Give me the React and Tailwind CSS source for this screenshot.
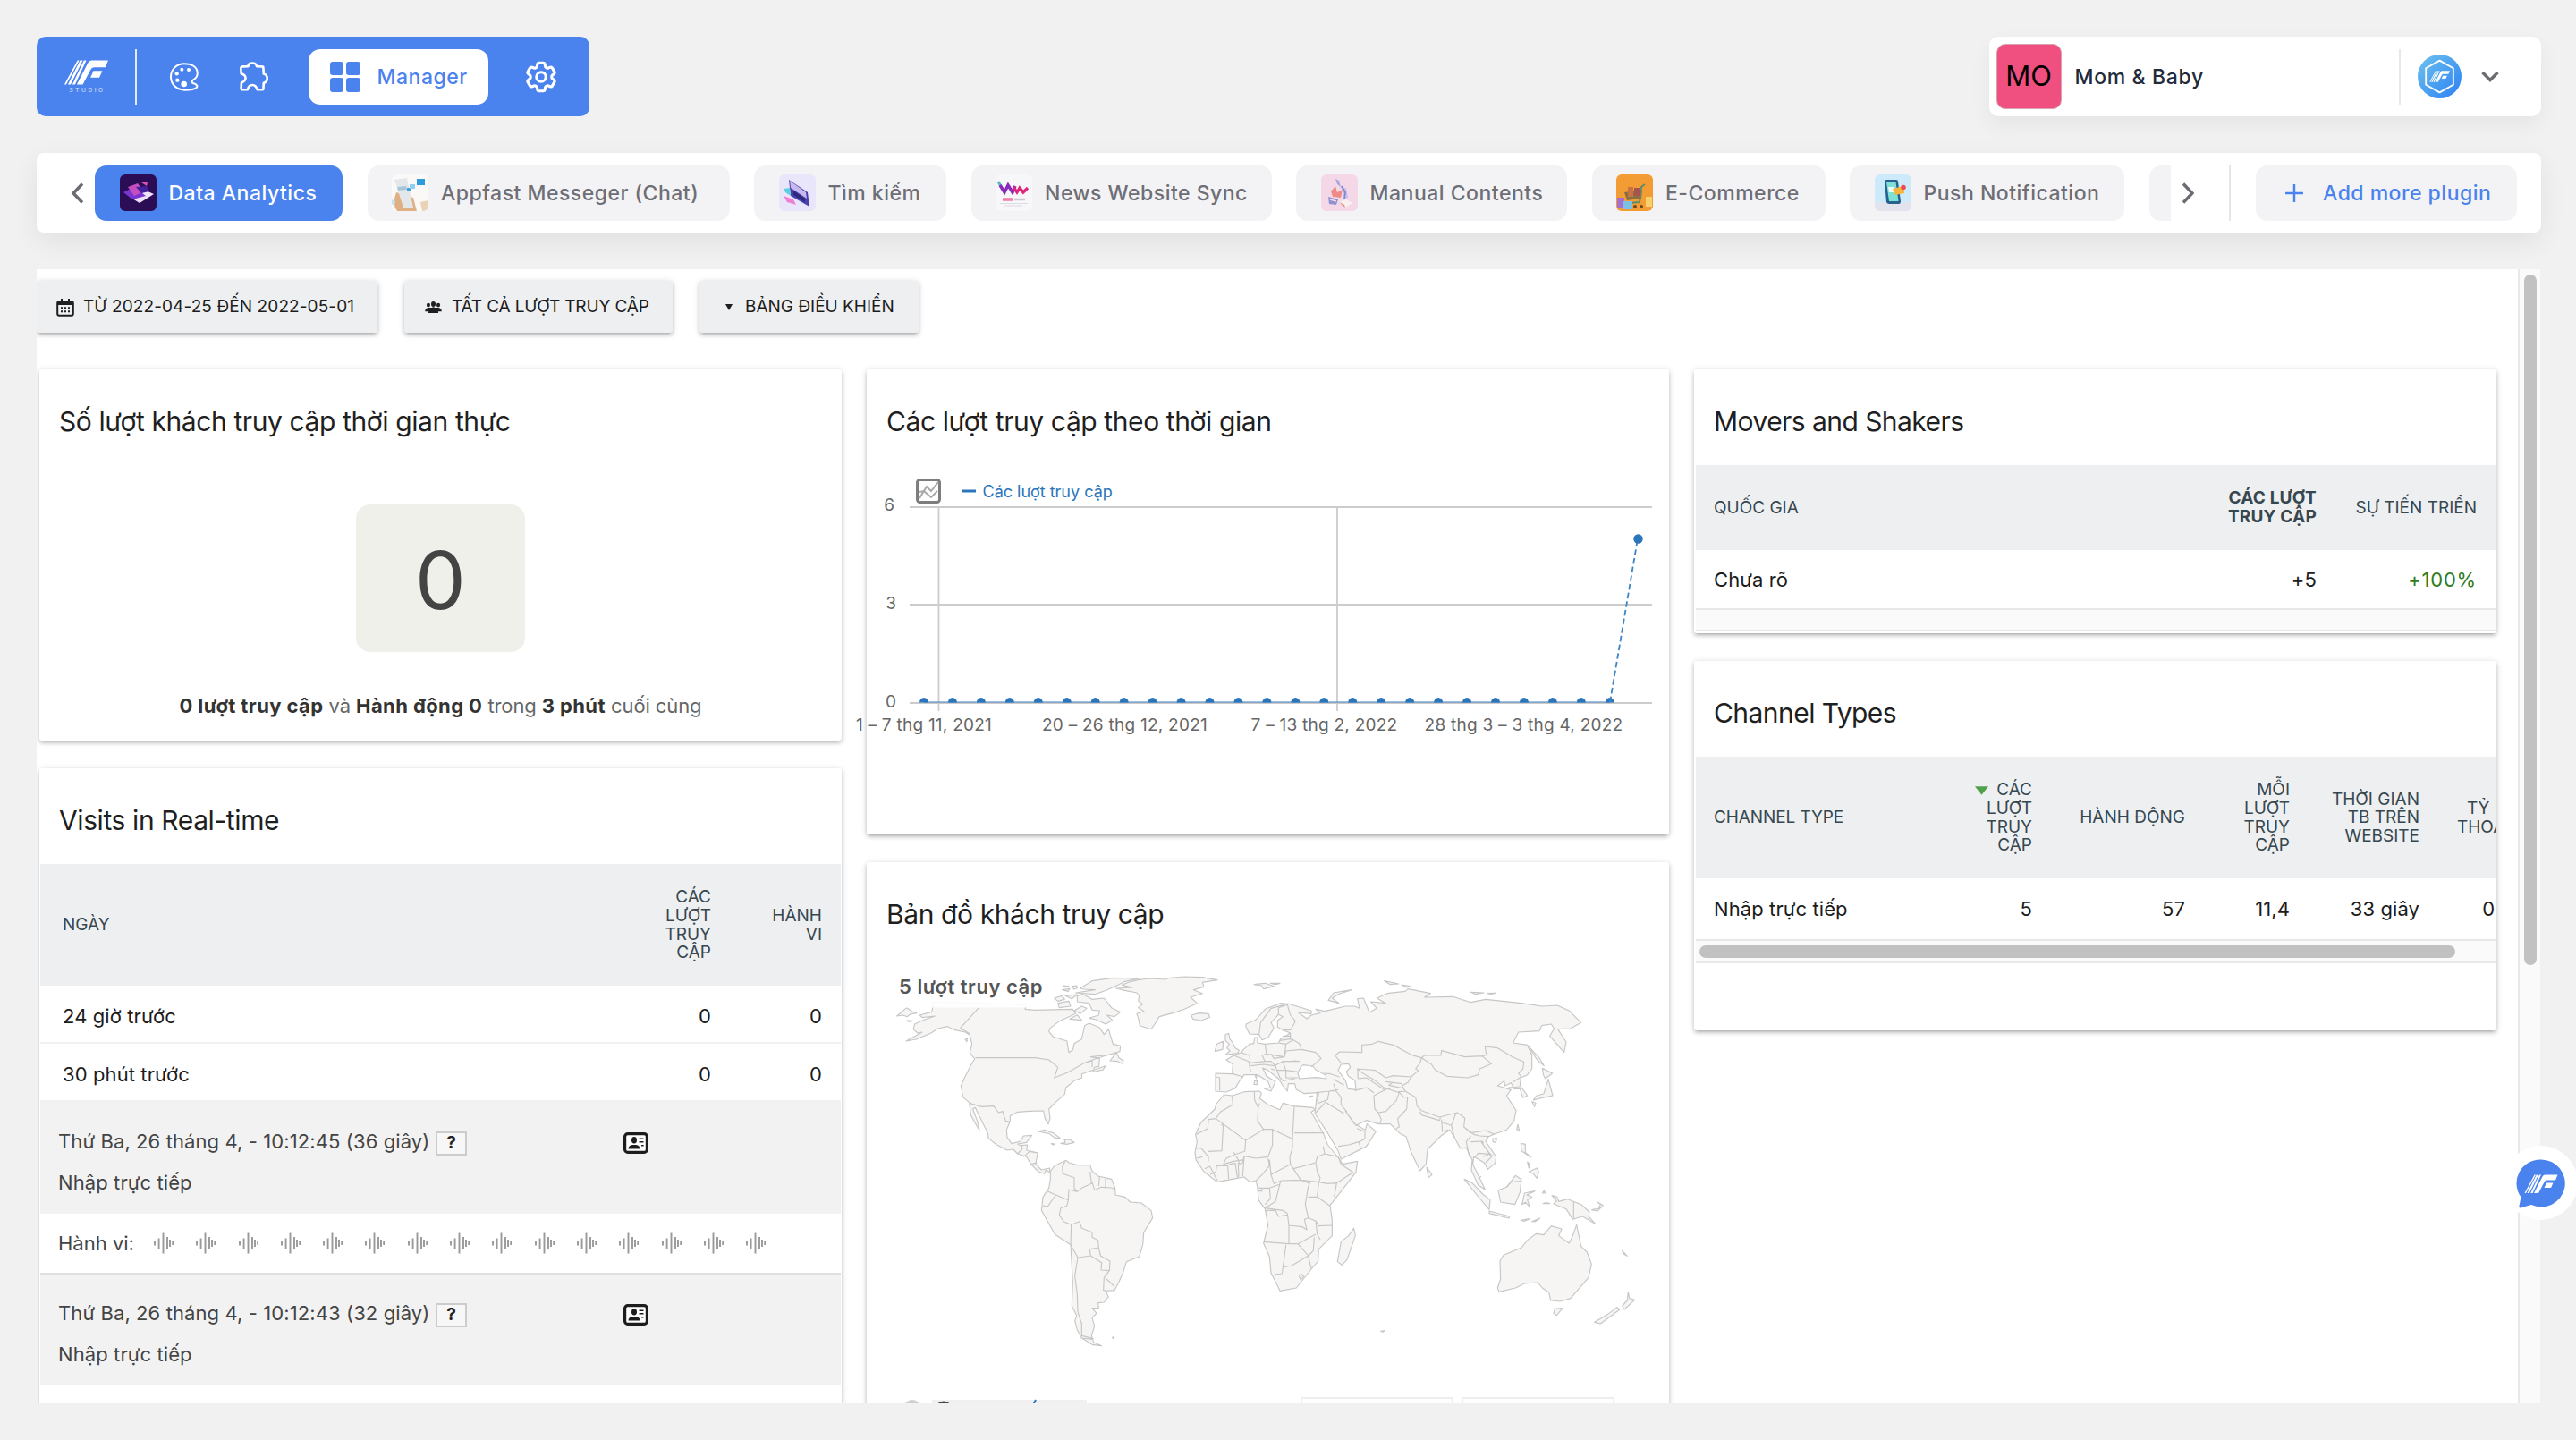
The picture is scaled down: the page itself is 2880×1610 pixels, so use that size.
import React from "react";
import { HiOutlineCog6Tooth } from "react-icons/hi2";

/* ---------- brand marks and icons ---------- */

function BrandGlyph() {
  return (
    <g>
      <path d="M0 82 L6 82 L50 0 L44 0Z M12 82 L21 82 L62 0 L53 0Z M27 82 L36 82 L74 0 L66 0Z" />
      <path d="M42 82 L62 82 L88 33 Q92 24 100 24 L138 24 L148 0 L92 0 Q84 0 80 8Z" />
      <path d="M98 36 L128 36 L118 58 L88 58Z" />
    </g>
  );
}

function StudioLogo() {
  return (
    <div className="flex h-[38px] w-[52px] flex-col items-center">
      <svg viewBox="0 0 148 82" className="h-[28px] w-[49px] fill-white">
        <BrandGlyph />
      </svg>
      <span className="mt-[3px] pl-[3px] text-[6.5px] leading-[7px] tracking-[2.6px] text-white/80">STUDIO</span>
    </div>
  );
}

function PaletteIcon() {
  return (
    <svg viewBox="450 88 96 96" className="h-[32px] w-[32px]">
      <path
        d="M498 92 C471 92 453 112 453 136 C453 162 474 180 500 180 C516 180 531 178 540 171 C544 165 537 160 529 158 C521 155 523 147 532 143 C541 137 543 128 542 119 C539 100 519 92 498 92Z"
        fill="none"
        stroke="white"
        strokeWidth="6"
      />
      <g fill="white">
        <circle cx="490" cy="111" r="6" />
        <circle cx="513" cy="112" r="6" />
        <circle cx="473" cy="125" r="6.5" />
        <circle cx="475" cy="147" r="6.5" />
        <circle cx="497" cy="160" r="10" />
      </g>
    </svg>
  );
}

function PuzzleIcon() {
  return (
    <svg viewBox="684 86 98 100" className="h-[33px] w-[32px]">
      <path
        d="M693 102 L713 101 Q713 90 727 90 Q741 90 742 101 L761 102 Q765 102 765 107 L766 127 Q778 130 778 142 Q778 155 766 158 L765 177 Q765 181 760 181 L744 181 Q740 165 727 165 Q715 165 711 181 L694 181 Q689 181 689 177 L690 157 Q704 152 704 141 Q704 131 689 126 L688 107 Q689 102 693 102Z"
        fill="none"
        stroke="white"
        strokeWidth="8"
        strokeLinejoin="round"
      />
    </svg>
  );
}

function GridIcon() {
  return (
    <div className="grid h-[34px] w-[34px] grid-cols-2 gap-[3px]">
      <i className="rounded-[3px] bg-[#4a82ee]" />
      <i className="rounded-[3px] bg-[#4a82ee]" />
      <i className="rounded-[3px] bg-[#4a82ee]" />
      <i className="rounded-[3px] bg-[#4a82ee]" />
    </div>
  );
}

function Chevron({ d, box, className }) {
  return (
    <svg viewBox={box} className={className} fill="none" stroke="#6b6b72" strokeWidth="3.4">
      <path d={d} />
    </svg>
  );
}

function AccountLogo() {
  return (
    <svg viewBox="0 0 48 48" className="h-[49px] w-[49px]">
      <defs>
        <linearGradient id="acc" x1="0" y1="0" x2="1" y2="1">
          <stop offset="0" stopColor="#6fc3ee" />
          <stop offset="1" stopColor="#2a80f3" />
        </linearGradient>
      </defs>
      <circle cx="24" cy="24" r="24" fill="url(#acc)" />
      <path d="M24 6.5 L39 15 V33 L24 41.5 L9 33 V15Z" fill="none" stroke="white" strokeWidth="1.8" strokeLinejoin="round" />
      <g transform="translate(13 17.8) scale(0.15)" fill="white">
        <BrandGlyph />
      </g>
    </svg>
  );
}

function CalendarIcon() {
  return (
    <svg viewBox="0 0 20 20" className="h-[20px] w-[20px]">
      <path d="M5 0h2v3H5zM13 0h2v3h-2z" fill="#1f1f1f" />
      <rect x="1.2" y="3" width="17.6" height="15.8" rx="2" fill="none" stroke="#1f1f1f" strokeWidth="2" />
      <rect x="1" y="2.5" width="18" height="4.5" fill="#1f1f1f" />
      <path d="M5 9.2h2v2H5zM9 9.2h2v2H9zM13 9.2h2v2h-2zM5 13.2h2v2H5zM9 13.2h2v2H9zM13 13.2h2v2h-2z" fill="#1f1f1f" />
    </svg>
  );
}

function UsersIcon() {
  return (
    <svg viewBox="0 0 20 14" className="h-[13px] w-[19px]" fill="#1f1f1f">
      <ellipse cx="4" cy="4.4" rx="2.2" ry="2.6" />
      <ellipse cx="16" cy="4.4" rx="2.2" ry="2.6" />
      <ellipse cx="10" cy="3.2" rx="2.7" ry="3.2" />
      <path d="M0 12 Q0 8 4 7.5 Q7 8 10 7 Q13 8 16 7.5 Q20 8 20 12Z" />
      <path d="M4 14 Q4 8 10 7 Q16 8 16 14Z" />
    </svg>
  );
}

function ProfileCardIcon() {
  return (
    <svg viewBox="0 0 28 24" className="h-[24px] w-[28px]">
      <rect x="1.6" y="1.6" width="24.8" height="20.8" rx="3.2" fill="white" stroke="#1d1d1d" strokeWidth="3.2" />
      <ellipse cx="12" cy="8.7" rx="3" ry="3.8" fill="#1d1d1d" />
      <path d="M5.5 18.5 Q5.5 14.5 10 14 L14 14 Q18.5 14.5 18.5 18.5Z" fill="#1d1d1d" />
      <path d="M17.5 6.5h5v1.6h-5zM17.5 10h5v1.6h-5zM20 14h2.6v1.6H20z" fill="#1d1d1d" />
    </svg>
  );
}

function ActionIcon() {
  return (
    <svg viewBox="0 0 22 24" className="h-[24px] w-[22px]" stroke="#999999" strokeWidth="1.9">
      <path d="M1 9.5V14.5M5.6 6.5V18M10.5 0.5V23.5M15 5V18.5M18 8V16M21.2 10V14" />
    </svg>
  );
}

/* ---------- plugin thumbnails ---------- */

function Thumb({ children }) {
  return (
    <svg viewBox="0 0 41 41" className="h-[41px] w-[41px] shrink-0 rounded-[6px]">
      {children}
    </svg>
  );
}

const thumbs = {
  analytics: (
    <Thumb>
      <rect width="41" height="41" fill="#2a0d55" />
      <path d="M14 27 L29 18 L38 22 L22 32Z" fill="#efe3fb" />
      <path d="M4 20 L16 14 L29 24 L14 28Z" fill="#7a35d0" />
      <path d="M9 14 L20 10 L27 19 L16 24Z" fill="#c44ec0" />
      <path d="M18 14 L30 13 L33 19 L24 21Z" fill="#44209c" />
      <path d="M24 9 L31 9 L30 13Z" fill="#d94fb4" />
    </Thumb>
  ),
  chat: (
    <Thumb>
      <rect width="41" height="41" fill="#faf9f8" />
      <path d="M5 20 Q0 34 6 41 H28 L24 26Z" fill="#dfb083" />
      <path d="M3 6 L17 4 L24 37 L13 37Z" fill="#e3e7ea" />
      <path d="M6 14 L16 13 L17 17 L7 18Z" fill="#a8c6da" />
      <rect x="28" y="5" width="9" height="7" fill="#2f9bdc" />
      <rect x="17" y="15" width="4" height="4" fill="#3aa4de" />
      <path d="M20 11h6v5h-6z" fill="#8ed0f0" />
      <path d="M32 31 L41 29 V41 H34Z" fill="#ead3b5" />
      <path d="M0 28 L4 30 L3 35 L0 33Z" fill="#bfe3f0" />
    </Thumb>
  ),
  search: (
    <Thumb>
      <rect width="41" height="41" fill="#e9e6fb" />
      <path d="M11 6 L32 20 L34 36 L13 24Z" fill="#4b3fae" />
      <path d="M12 7 L30 20 L31 27 L13 15Z" fill="#c9b8ee" />
      <path d="M5 16 L12 15 L13 24 L7 20Z" fill="#5fd0df" />
      <path d="M5 24 L16 28 L19 34 L9 31Z" fill="#ee7fd2" />
      <path d="M16 18 L29 27 L29 31 L16 23Z" fill="#2d2b79" />
    </Thumb>
  ),
  news: (
    <Thumb>
      <rect width="41" height="41" fill="#f7f7fa" />
      <path d="M3 8 L8 17" stroke="#55b9bd" strokeWidth="3" fill="none" />
      <path d="M5 12 L10 20 L14 12 L19 20 L22 13" stroke="#8a2bbd" strokeWidth="3.4" fill="none" />
      <path d="M20 14 L24 20 L27 15 L31 20 L36 15" stroke="#e0247a" strokeWidth="3.2" fill="none" />
      <path d="M8 28h12" stroke="#f27aa5" strokeWidth="3.4" />
      <path d="M21 28h12" stroke="#c9c9cf" strokeWidth="2.6" />
      <path d="M5 32.5h31M10 35h20" stroke="#dcdce0" strokeWidth="1.2" />
    </Thumb>
  ),
  manual: (
    <Thumb>
      <rect width="41" height="41" fill="#f4d8e8" />
      <path d="M16 5 L20 7 L22 14 L18 11Z" fill="#a9a6dd" />
      <path d="M20 12 L28 16 L30 26 L25 28 L24 18Z" fill="#c3bcec" />
      <path d="M11 19 L16 13 L18 20 L24 17 L22 26 L13 25Z" fill="#ef8b86" />
      <path d="M23 13 L27 20 L26 28" stroke="#7f88d2" strokeWidth="1.6" fill="none" />
      <path d="M8 25 L19 28 L17 34 L9 33Z" fill="#8f93cf" />
      <path d="M10 28 L17 30" stroke="#f4d8e8" strokeWidth="1.4" />
      <path d="M20 31 L28 28 L35 32 L27 37Z" fill="#f9f1ee" />
      <path d="M20 31 L27 37 L26 34Z" fill="#e07c74" />
    </Thumb>
  ),
  shop: (
    <Thumb>
      <rect width="41" height="41" fill="#f39c33" />
      <path d="M9 20 L29 17 L28 27 L12 29Z" fill="#8a7040" />
      <rect x="13" y="14" width="6" height="11" fill="#c97244" />
      <rect x="20" y="15" width="6" height="9" fill="#a8544c" />
      <path d="M32 11 L28 14 L26 31 L13 32" stroke="#5f8c68" strokeWidth="2" fill="none" />
      <rect x="1" y="26" width="8" height="12" fill="#a36fd0" />
      <rect x="8" y="30" width="10" height="9" fill="#7cc1e4" />
      <rect x="33" y="25" width="7" height="11" fill="#f7cf6b" />
      <circle cx="21" cy="36" r="2" fill="#6b4a2a" />
      <circle cx="28" cy="36" r="2" fill="#6b4a2a" />
    </Thumb>
  ),
  push: (
    <Thumb>
      <rect width="41" height="41" fill="#cdeafb" />
      <rect y="31" width="41" height="10" fill="#e3e3ee" />
      <path d="M11 8 Q11 6 13 6 L24 6 Q26 6 26 8 L29 30 Q29 33 27 33 L16 33 Q14 33 13 31Z" fill="#27618f" />
      <path d="M13 8.5 L23.5 8.5 L26.5 30 L16 30Z" fill="#7fe0d5" />
      <path d="M15 14 L22 14 L23 20 L16 20Z" fill="#eefcfa" />
      <path d="M20 16 L32 13 L33 21 L23 23Z" fill="#f6b63d" />
      <circle cx="32" cy="14.5" r="2.8" fill="#ee4c52" />
    </Thumb>
  ),
};

const plugins = [
  { label: "Appfast Messeger (Chat)", thumb: "chat", width: "w-[405px]" },
  { label: "Tìm kiếm", thumb: "search", width: "w-[215px]" },
  { label: "News Website Sync", thumb: "news", width: "w-[336px]" },
  { label: "Manual Contents", thumb: "manual", width: "w-[303px]" },
  { label: "E-Commerce", thumb: "shop", width: "w-[261px]" },
  { label: "Push Notification", thumb: "push", width: "w-[307px]" },
];

/* ---------- top bars ---------- */

const navText = "pt-[1px] text-[23px] font-medium tracking-[0.5px] whitespace-nowrap";

function Header() {
  return (
    <header className="flex h-[89px] items-stretch justify-between">
      <nav className="flex w-[618px] items-center rounded-[10px] bg-[#4a82ee]">
        <div className="ml-[29px]">
          <StudioLogo />
        </div>
        <div className="ml-[28.5px] h-[62px] w-[2px] bg-white/85" />
        <div className="ml-[37px]">
          <PaletteIcon />
        </div>
        <div className="ml-[46px]">
          <PuzzleIcon />
        </div>
        <div className="ml-[45px] flex h-[62px] w-[201px] items-center rounded-[13px] bg-white pl-[24px]">
          <GridIcon />
          <span className={`${navText} ml-[19px] text-[#4a82ee]`}>Manager</span>
        </div>
        <HiOutlineCog6Tooth strokeWidth={1.8} className="ml-[38px] h-[42px] w-[42px] text-white" />
      </nav>
      <div className="flex w-[617px] items-center rounded-[10px] bg-white pl-[8px] shadow-[0_10px_24px_rgba(0,0,0,0.05)]">
        <div className="flex h-[73px] w-[73px] items-center justify-center rounded-[10px] border border-[#d9a3b4] bg-[#ef5080] text-[31px] text-black">
          MO
        </div>
        <span className={`${navText} ml-[15px] w-[362px] text-[#222b3a]`}>
          <span className="tracking-[0.65px]">Mom &amp; Baby</span>
        </span>
        <div className="h-[62px] w-[2px] bg-[#e8e8e8]" />
        <div className="ml-[19px]">
          <AccountLogo />
        </div>
        <Chevron box="0 0 20 13" d="M1.5 2 L10 10.5 L18.5 2" className="ml-[22px] h-[13px] w-[20px]" />
      </div>
    </header>
  );
}

function PluginBar() {
  return (
    <div className="mt-[41px] flex h-[89px] items-center rounded-[8px] bg-white shadow-[0_10px_30px_rgba(0,0,0,0.07)]">
      <Chevron box="0 0 15 24" d="M13 1.5 L3 12 L13 22.5" className="ml-[38px] h-[24px] w-[15px]" />
      <div className="ml-[12px] flex w-[2321px] gap-[27.5px] overflow-hidden">
        <div className="flex h-[62px] w-[277px] shrink-0 items-center rounded-[13px] bg-[#4a82ee] pl-[27.5px]">
          {thumbs.analytics}
          <span className={`${navText} ml-[14px] text-white`}>Data Analytics</span>
        </div>
        {plugins.map((p) => (
          <div key={p.label} className={`flex h-[62px] shrink-0 items-center rounded-[13px] bg-[#f3f3f5] pl-[27.5px] ${p.width}`}>
            {thumbs[p.thumb]}
            <span className={`${navText} ml-[14px] text-[#6e6e76]`}>{p.label}</span>
          </div>
        ))}
        <div className="h-[62px] w-[200px] shrink-0 rounded-[13px] bg-[#f3f3f5]" />
      </div>
      <Chevron box="0 0 15 24" d="M2 1.5 L12 12 L2 22.5" className="ml-[12px] h-[24px] w-[15px]" />
      <div className="ml-[38px] h-[62px] w-[2px] bg-[#e6e6e6]" />
      <div className="ml-[28px] flex h-[62px] w-[292px] items-center rounded-[13px] bg-[#f3f3f5] pl-[33px]">
        <svg viewBox="0 0 20 20" className="h-[20px] w-[20px]" stroke="#4a82ee" strokeWidth="2.4">
          <path d="M10 0V20M0 10H20" />
        </svg>
        <span className={`${navText} ml-[22px] text-[#4a82ee]`}>Add more plugin</span>
      </div>
    </div>
  );
}

/* ---------- dashboard parts ---------- */

const raised =
  "shadow-[0_3px_4px_rgba(0,0,0,0.14),0_4px_2px_-3px_rgba(0,0,0,0.12),0_1px_7px_rgba(0,0,0,0.16)]";

function FilterButton({ children, className }) {
  return (
    <div
      className={`flex h-[58px] items-center rounded-[3px] bg-[#eeeff1] pt-[1px] text-[19px] whitespace-nowrap text-[#1c1c1c] ${raised} ${className}`}
    >
      {children}
    </div>
  );
}

function Card({ title, tracking = "tracking-[-0.4px]", className = "", children }) {
  return (
    <section className={`flex w-[897px] flex-col rounded-[3px] bg-white ${raised} ${className}`}>
      <h2 className={`flex h-[107px] shrink-0 items-center pt-[9px] pl-[22px] text-[30px] text-[#1f1f1f] ${tracking}`}>
        {title}
      </h2>
      {children}
    </section>
  );
}

const headCell = "text-[19px] leading-[20.6px] text-[#37474f] whitespace-nowrap";
const bodyCell = "text-[22px] tracking-[0.1px] text-[#1c1c1c] whitespace-nowrap";

function Lines({ items, className = "" }) {
  return (
    <div className={`${headCell} text-right ${className}`}>
      {items.map((t) => (
        <div key={t}>{t}</div>
      ))}
    </div>
  );
}

function LiveCounter() {
  return (
    <Card title="Số lượt khách truy cập thời gian thực" className="h-[415px]">
      <div className="mt-[44px] flex h-[165px] w-[189px] items-center justify-center self-center rounded-[16px] bg-[#f0f0eb] pt-[4px] text-[90px] text-[#444444]">
        0
      </div>
      <p className="mt-[44px] text-center text-[22px] tracking-[-0.1px] text-[#666666]">
        <b className="tracking-[0.4px] text-[#333333]">0 lượt truy cập</b> và{" "}
        <b className="tracking-[0.4px] text-[#333333]">Hành động 0</b> trong{" "}
        <b className="tracking-[0.4px] text-[#333333]">3 phút</b> cuối cùng
      </p>
    </Card>
  );
}

function Visit({ time }) {
  return (
    <div className="h-[124.5px] bg-[#f2f2f2] pl-[20px] text-[22px] tracking-[0.1px] text-[#444444]">
      <div className="flex h-[88px] items-center">
        <span className="w-[422px] whitespace-nowrap">{time}</span>
        <span className="mt-[4px] flex h-[27px] w-[35px] items-center justify-center border-2 border-[#cccccc] bg-[#f7f7f7] text-[19px] font-bold text-[#222222]">
          ?
        </span>
        <span className="mt-[3px] ml-[175px]">
          <ProfileCardIcon />
        </span>
      </div>
      <div className="-mt-[12px] flex h-[28px] items-center">Nhập trực tiếp</div>
    </div>
  );
}

function RealtimeVisits() {
  return (
    <Card title="Visits in Real-time" className="h-[780px]">
      <div className="mx-[1px]">
        <div className="flex h-[136px] items-center bg-[#eeeff1] pt-[1px] pl-[25px]">
          <span className={`${headCell} w-[600px]`}>NGÀY</span>
          <Lines className="w-[125px]" items={["CÁC", "LƯỢT", "TRUY", "CẬP"]} />
          <Lines className="w-[124px]" items={["HÀNH", "VI"]} />
        </div>
        {["24 giờ trước", "30 phút trước"].map((t) => (
          <div key={t} className={`${bodyCell} flex h-[65px] items-center border-b-2 border-[#f1f1f1] pt-[5px] pl-[25px]`}>
            <span className="w-[600px]">{t}</span>
            <span className="w-[125px] text-right">0</span>
            <span className="w-[124px] text-right">0</span>
          </div>
        ))}
        <Visit time="Thứ Ba, 26 tháng 4, - 10:12:45 (36 giây)" />
        <div className="flex h-[68px] items-center border-b-2 border-[#dfdfdf] pt-[1px] pl-[20px]">
          <span className="w-[107px] text-[22px] text-[#444444]">Hành vi:</span>
          <div className="flex gap-[25.3px]">
            {Array.from({ length: 15 }, (_, i) => (
              <ActionIcon key={i} />
            ))}
          </div>
        </div>
        <Visit time="Thứ Ba, 26 tháng 4, - 10:12:43 (32 giây)" />
      </div>
    </Card>
  );
}

function VisitsChart() {
  const xs = Array.from({ length: 25 }, (_, i) => 1033 + i * 31.95);
  return (
    <Card title="Các lượt truy cập theo thời gian" className="h-[520px]">
      <svg viewBox="949 520 917 310" className="-ml-[20px] h-[310px] w-[917px]">
        <rect x="1025.5" y="536.5" width="25" height="25" rx="3" fill="white" stroke="#7d7d7d" strokeWidth="3" />
        <path d="M1028 557 L1036 544 L1041 549 L1049 539 M1028 550 L1033 549 L1041 556 L1048 549" fill="none" stroke="#a8a8a8" strokeWidth="2" />
        <path d="M1075 549H1091" stroke="#2b75ba" strokeWidth="3" />
        <text x="1098.500" y="556" fontSize="18" fill="#2b75ba">Các lượt truy cập</text>
        <path d="M1017 567H1847M1017 676H1847M1017 786H1847M1049.500 566V795M1495 566V795" stroke="#cccccc" strokeWidth="1.8" />
        <g fontSize="19" fill="#666666" textAnchor="end">
          <text x="1000" y="571">6</text>
          <text x="1002" y="681">3</text>
          <text x="1002" y="791">0</text>
        </g>
        <g fontSize="19" fill="#666666" textAnchor="middle" letterSpacing="0.25">
          <text x="1033" y="817">1 – 7 thg 11, 2021</text>
          <text x="1257.500" y="817">20 – 26 thg 12, 2021</text>
          <text x="1480.500" y="817">7 – 13 thg 2, 2022</text>
          <text x="1703.500" y="817">28 thg 3 – 3 thg 4, 2022</text>
        </g>
        {xs.map((x) => (
          <path key={x} d={`M${x - 5} 785.500A5 5.500 0 0 1 ${x + 5} 785.500Z`} fill="#2b75ba" />
        ))}
        <path d="M1033 785H1800" stroke="#2b75ba" strokeOpacity="0.6" strokeWidth="1.6" />
        <path d="M1800 785L1831 602" stroke="#3b84c8" strokeWidth="1.8" strokeDasharray="6.500 3.300" />
        <circle cx="1831.500" cy="602.500" r="5.200" fill="#2b75ba" />
      </svg>
    </Card>
  );
}

/* Land shapes of the western half of the map. */
const westLand = [
  "M155 120L155 140L152 154L112 165L120 173L163 168L120 183L95 195L90 212L105 225L120 222L66 252L100 246L150 225L172 210L205 203L230 215L265 222L280 232L287 262L280 290L296 312L285 330L262 375L250 402L257 440L278 458L283 500L305 540L312 550L305 520L290 480L298 475L310 500L340 560L342 578L370 600L405 618L425 615L440 630L470 640L485 665L510 690L530 697L535 685L548 692L548 678L520 684L500 665L508 627L470 618L473 600L450 602L440 597L470 592L488 568L460 570L450 588L420 596L405 575L403 550L415 520L415 503L440 490L480 487L527 486L532 512L543 530L549 512L545 480L570 455L598 430L602 408L630 385L656 375L655 362L685 352L710 344L735 335L727 348L692 356L698 340L713 337L715 310L685 305L745 298L783 287L785 268L760 262L745 212L730 230L716 208L700 200L680 192L665 200L655 245L630 260L625 282L612 290L607 262L606 252L560 238L545 220L550 208L580 185L635 160L625 145L500 148L465 145L470 130L320 125Z",
  "M845 47L880 42L935 45L950 40L1000 36L1060 38L1110 47L1060 55L1065 70L1030 80L1060 92L1020 105L1042 125L1000 145L960 158L915 170L900 195L888 212L850 200L845 175L840 160L864 152L845 140L860 128L845 118L848 100L840 90L800 82L770 75L825 72L790 64L820 52Z",
  "M650 75L690 50L760 40L848 42L800 52L780 62L740 80L700 95L635 90L700 80L665 78Z",
  "M640 100L660 95L690 112L730 108L755 140L785 155L765 170L740 165L758 182L735 195L705 180L680 175L712 165L715 150L690 148L680 125L640 120Z",
  "M575 125L612 118L618 135L580 140Z",
  "M600 100L640 96L622 110Z",
  "M563 108L590 100L598 112L575 118Z",
  "M590 80L615 76L610 85Z",
  "M593 66L612 68L600 71Z",
  "M625 68L638 66L640 74L628 78Z",
  "M615 178L640 164L655 182Z",
  "M630 150L655 135L672 142L650 160Z",
  "M1022 165L1050 158L1080 160L1085 172L1055 183L1028 178Z",
  "M550 690L562 672L580 662L603 652L612 660L640 668L683 668L690 688L710 705L755 715L767 745L768 768L800 775L818 792L855 795L888 820L893 845L863 895L860 935L848 975L805 992L795 1025L780 1060L765 1088L735 1090L745 1110L730 1128L710 1130L712 1147L690 1148L705 1165L690 1180L698 1208L688 1240L695 1262L722 1274L690 1270L655 1248L640 1220L632 1190L638 1172L622 1140L625 1060L618 935L565 900L520 820L525 775L545 745L550 715Z",
  "M508 555L530 550L560 560L583 578L565 577L545 562Z",
  "M597 583L615 582L630 592L605 598L585 595L600 593Z",
  "M553 596L566 597L560 600Z",
  "M750 318L772 290L780 308L795 318L792 328L775 320Z",
  "M35 168L68 140L85 152L102 158L80 162L70 170L55 165Z",
  "M68 183L88 184L75 187Z",
  "M264 246L272 242L270 254Z",
  "M1137 230L1148 226L1152 245L1160 255L1170 275L1183 283L1178 293L1137 298L1152 285L1142 275L1150 262L1137 250Z",
  "M1108 262L1130 253L1128 280L1102 286Z",
  "M757 1246L764 1244L763 1251Z",
];

const westBorders =
  "M298 308H500L545 315L575 340L563 375L610 356L665 325L700 312L745 298M665 325L690 318L690 340M310 140L248 208L280 228M278 460L320 472L360 470L376 492L390 488L400 520L412 522M440 630L455 615L455 602M460 640L480 622L508 627M485 665L505 660M600 655L590 672L592 697L630 710L630 745L640 757L655 745L688 730L683 690M640 757L612 750L610 785L568 768L540 755M690 725L698 752L720 742L755 744L767 750M715 708L712 738M735 714L735 744M568 768L540 808L525 804M610 785L605 805L585 812L580 835L595 858L620 868L618 935L642 978L685 972L682 950L712 945L710 920L690 910L690 893L655 880L648 857L620 868M642 978L632 1040L640 1100L642 1160L655 1200L655 1240L695 1250M685 972L722 995L720 1020L748 1022L750 990L718 972L712 945M748 1022L730 1045L728 1088L735 1090M735 1047L765 1075M655 1248L690 1252";

/* Land shapes of the eastern half of the map. */
const eastLand = [
  "M-36 360L20 362L22 330L0 315L25 300L50 290L58 280L78 262L92 260L95 240L105 240L105 258L130 262L175 258L182 245L215 225L190 215L172 205L172 182L190 170L175 163L150 190L160 208L140 240L120 248L110 230L78 228L66 205L66 195L100 180L130 145L180 125L215 128L285 150L285 160L242 156L270 177L285 165L315 158L300 145L330 152L400 135L430 135L447 142L440 110L460 108L480 156L505 142L485 120L535 125L505 108L540 92L600 85L610 77L685 92L665 105L760 103L820 122L870 112L990 125L1060 135L1110 132L1150 150L1172 172L1190 190L1155 210L1112 212L1140 255L1133 290L1085 235L1100 210L1090 195L1058 200L1050 218L980 222L962 258L1010 265L1025 300L1025 345L1010 365L988 375L985 400L1010 435L995 442L985 412L965 412L955 392L935 402L932 386L910 402L955 415L940 435L972 485L965 520L940 550L905 562L880 572L870 588L905 640L902 662L877 682L865 660L840 645L830 640L827 665L850 712L868 750L845 735L822 685L825 650L805 610L785 612L765 575L750 550L720 570L675 615L670 665L650 687L620 625L603 572L580 560L550 530L512 530L470 518L435 535L400 487L428 528L466 550L472 530L502 555L470 605L385 648L375 620L340 560L297 495L305 425L262 428L235 415L230 395L208 395L205 420L190 402L175 378L140 350L122 342L135 370L165 388L150 420L128 412L148 408L140 388L105 365L60 365L45 385L30 410L0 423L-36 420Z",
  "M-8 432L20 435L60 422L112 420L118 428L112 445L140 465L180 482L190 460L225 470L290 475L298 482L285 490L325 560L340 600L378 645L390 665L440 655L435 692L370 775L348 803L355 850L355 905L310 950L308 990L285 1017L235 1080L180 1090L168 1065L150 1030L145 975L125 930L140 870L130 815L108 785L105 745L100 720L80 725L60 708L20 715L-30 725L-75 690L-102 650L-105 625L-98 590L-103 565L-85 525L-38 480L-35 465Z",
  "M428 880L433 905L405 985L388 1003L373 992L385 925L410 905Z",
  "M1175 868L1190 940L1210 960L1225 1000L1215 1045L1155 1115L1120 1125L1088 1122L1082 1095L1060 1080L1045 1062L1000 1065L970 1080L915 1093L910 1080L920 1050L918 990L930 970L990 945L1010 920L1040 898L1065 902L1090 872L1125 882L1115 905L1150 930L1162 905Z",
  "M1102 1150L1128 1148L1108 1172L1098 1165Z",
  "M1348 1093L1352 1115L1370 1120L1335 1152L1328 1140L1345 1122Z",
  "M1310 1145L1320 1152L1255 1200L1235 1195L1280 1168Z",
  "M1328 955L1345 973L1333 966Z",
  "M1092 770L1110 775L1115 790L1145 782L1190 800L1218 825L1215 840L1238 865L1195 840L1162 850L1140 815L1098 798L1108 788Z",
  "M1226 818L1250 813L1255 800L1245 792L1264 803L1245 822Z",
  "M970 703L990 716L985 760L968 800L920 792L912 752L940 742Z",
  "M798 715L825 728L860 765L885 785L882 817L850 780Z",
  "M882 822L950 840L948 846L882 830Z",
  "M988 853L1018 848L1000 856Z",
  "M1025 857L1052 846L1035 858Z",
  "M1000 762L1035 755L1008 768L1025 775L1010 785L1018 808L1003 793L992 800Z",
  "M1060 762L1066 753L1070 762Z",
  "M1062 797L1085 797L1070 794Z",
  "M988 595L1003 598L1003 625L1022 642L990 620Z",
  "M1015 690L1042 678L1048 692L1042 712L1028 695Z",
  "M1010 657L1020 668L1015 678Z",
  "M978 532L983 552L974 548Z",
  "M893 580L907 578L904 592L895 590Z",
  "M672 675L690 700L678 710Z",
  "M1060 343L1094 360L1070 378L1064 366Z",
  "M1080 380L1095 435L1060 442L1030 450L1040 436L1065 428Z",
  "M1025 455L1038 460L1034 472Z",
  "M1012 268L1050 308L1066 335L1045 318Z",
  "M342 115L360 90L420 80L375 95L355 108L378 125Z",
  "M93 62L130 58L160 68L125 77L118 66Z",
  "M148 58L180 58L165 62Z",
  "M530 50L578 60L550 62Z",
  "M588 63L616 68L605 72Z",
  "M820 88L864 90L835 95Z",
  "M875 92L902 91L888 94Z",
  "M95 385L103 385L103 398L93 397Z",
  "M97 368L102 366L101 378Z",
  "M278 437L290 436L284 440Z",
  "M518 1225L532 1223L525 1228Z",
];

const eastBorders =
  "M385 325L365 300L380 288L455 290L455 265L490 262L510 253L560 265L620 298L655 308L650 325L635 345L645 350L620 372L560 368L535 375L500 350L440 345L442 378M655 308L665 300L720 300L722 284L800 305L858 302L890 328L850 345L845 365L810 375L740 370L700 348L688 330L655 308M858 302L872 298L868 270L910 275L960 305L998 322L995 345L980 360L990 372L960 390M620 372L610 390L590 402L600 420L635 440L640 470L655 485L715 507L775 492L800 510L797 540L820 560L870 552L900 565M650 488L655 500L715 518L720 505M722 515L725 555L745 550M725 525L755 535L770 495M755 535L765 575M797 540L830 565L850 570L880 572M820 570L805 590L815 640M820 590L860 588L862 600L885 630L862 640M835 642L845 628L890 632M855 590L890 640M870 660L895 635M600 420L578 422L595 440L608 440L605 480L575 512L580 540L570 545M495 435L498 480L510 492L535 488L570 452L580 425L540 412L495 435M430 418L470 408L495 425M510 492L520 515L515 528M360 395L368 420L385 440L385 465L405 490M368 418L345 420L340 448L305 462M330 455L395 495M300 492L330 460M310 425L305 455M438 545L465 555L465 580L445 590L450 610M375 605L410 600L445 590M300 425L345 420L375 415M328 360L350 362L380 372M360 380L395 400M442 378L470 375L530 415M440 345L455 358L500 385L535 412L550 412M535 388L590 395M560 390L545 400L590 410M80 320L78 295M130 262L135 295L120 300L130 320L80 325M135 295L195 305L200 262L175 258M150 295L160 310L195 305M200 262L225 248L245 260L252 280L200 285M200 285L195 305M252 280L300 290L318 310L290 335L285 338M215 225L215 245L225 248M190 235L215 235M178 250L215 245M190 215L215 215M110 230L115 190L150 142L195 130M175 163L175 140L205 130L215 165L232 185L215 215M22 362L57 372M25 300L75 320L82 355M82 335L125 330L160 335L190 320L245 320L225 318M130 320L150 320L165 335M165 335L170 350L200 350L240 355M190 320L200 350L200 375L240 375M150 345L165 350M170 350L180 375L190 385L230 378M-36 372L-22 375L-22 418M50 290L75 300M20 435L22 465L-20 490L-35 512M-35 512L-60 515L-62 545L-100 565M-35 512L65 585L125 548L105 520L107 475L95 450L94 420M107 475L112 460M-10 530L-15 620L-62 622M-10 530L-18 535M65 585L62 622L35 630L0 645L-10 665M-105 612L-85 610L-60 640L-60 655M125 548L155 548L155 600L140 640L100 645L60 638L55 660L45 665L40 650L25 625M155 548L222 580L228 472M228 560H328M222 580L222 610L213 640L215 665L150 700L145 650M60 640L55 705M140 645L145 670L120 700L100 720M150 700L160 730L185 720L250 718L225 680L215 665M225 680L300 660L305 690L315 712L310 725L250 718M300 660L305 640L330 630L375 640L385 665L425 692L370 728L340 730L310 725M325 605L330 630M310 725L305 775L348 805M370 728L362 775M182 722L165 790L130 812L190 820L205 830L210 870L255 875L270 885L262 850L275 845L265 800L275 740L280 730L250 718M275 775H305M275 845L300 855L310 872L355 870M300 855L305 900L315 918M130 820H165L175 840L205 835M125 925L210 932L210 870M210 932L240 932L300 900M240 932L275 972L292 955L295 910M275 972L285 1015M200 935L195 975L187 1032L160 1035M193 1010L220 1005L275 972M244 1040L252 1033L260 1042L250 1052L244 1040M108 745H145L148 780L130 800M120 745V755H108M145 745L180 732M-72 680L-55 672L-30 720M-32 670L5 670L8 715M10 665L30 662L38 712M40 660L42 708M-32 670L-35 690L-55 700M-10 665L25 655L60 650M-100 645L-80 640M940 742L955 725L988 722M1165 790V850M945 408L985 405M845 712L855 706";

function VisitorMap() {
  return (
    <Card title="Bản đồ khách truy cập" className="h-[640px]">
      <svg viewBox="990 1071 850 500" className="ml-[22px] h-[500px] w-[850px] shrink-0">
        <g transform="translate(990 1080) scale(0.33333)" fill="#f6f5f4" stroke="#c6c6c6" strokeWidth="3.4" strokeLinejoin="round">
          {westLand.map((d) => (
            <path key={d} d={d} />
          ))}
          <path d={westBorders} fill="none" />
          <g transform="translate(1140 0)">
            {eastLand.map((d) => (
              <path key={d} d={d} />
            ))}
            <path d="M250 338L258 332L290 336L300 348L332 365L336 378L300 374L245 378L240 360Z" fill="white" />
            <path d="M375 350L385 330L410 328L416 340L402 355L410 370L432 385L435 415L408 412L400 385Z" fill="white" />
            <path d={eastBorders} fill="none" />
          </g>
        </g>
        <rect x="996" y="1090" width="179" height="36.500" fill="white" fillOpacity="0.9" />
        <text x="1004" y="1110.500" fontSize="22" fontWeight="600" fill="#555555" letterSpacing="0.55">5 lượt truy cập</text>
        <circle cx="1019" cy="1575" r="10" fill="#cfcfcf" />
        <rect x="1041" y="1565" width="173" height="10" fill="#f0f0f0" />
        <circle cx="1054" cy="1576" r="9.500" fill="#444444" />
        <path d="M1154 1571L1157 1565" stroke="#2b75ba" strokeWidth="2" />
        <rect x="1454" y="1563" width="169" height="30" fill="white" stroke="#eeeeee" strokeWidth="2" />
        <rect x="1634" y="1563" width="169" height="30" fill="white" stroke="#eeeeee" strokeWidth="2" />
      </svg>
    </Card>
  );
}

function Movers() {
  return (
    <Card title="Movers and Shakers" tracking="tracking-[-0.55px]" className="h-[295px]">
      <div className="mx-[1.5px]">
        <div className="flex h-[95px] items-center bg-[#eeeff1] pt-[1px] pl-[20.5px]">
          <span className={`${headCell} w-[561px]`}>QUỐC GIA</span>
          <Lines className="w-[113px] font-bold tracking-[0.2px]" items={["CÁC LƯỢT", "TRUY CẬP"]} />
          <span className={`${headCell} w-[179px] text-right`}>SỰ TIẾN TRIỂN</span>
        </div>
        <div className={`${bodyCell} flex h-[67px] items-center border-b-2 border-[#e8e8e8] pt-[2px] pl-[20.5px]`}>
          <span className="w-[561px]">Chưa rõ</span>
          <span className="w-[113px] text-right">+5</span>
          <span className="w-[179px] text-right tracking-[0.8px] text-[#2f7d1f]">+100%</span>
        </div>
        <div className="h-[24px] border-b-2 border-[#e8e8e8] bg-[#fafafa]" />
      </div>
    </Card>
  );
}

function ChannelTypes() {
  return (
    <Card title="Channel Types" tracking="tracking-[-0.55px]" className="h-[413px]">
      <div className="mx-[1.5px] overflow-hidden">
        <div className="flex h-[136px] w-[930px] items-center bg-[#eeeff1] pt-[1px] pl-[20.5px]">
          <span className={`${headCell} w-[256px] tracking-[-0.1px]`}>CHANNEL TYPE</span>
          <div className={`${headCell} w-[100px] text-right`}>
            <div className="flex items-center justify-end gap-[9px]">
              <svg viewBox="0 0 16 10" className="h-[10px] w-[15px]">
                <path d="M0 0H16L8 10Z" fill="#51a04b" />
              </svg>
              CÁC
            </div>
            <div>LƯỢT</div>
            <div>TRUY</div>
            <div>CẬP</div>
          </div>
          <span className={`${headCell} w-[171px] text-right`}>HÀNH ĐỘNG</span>
          <Lines className="w-[117px]" items={["MỖI", "LƯỢT", "TRUY", "CẬP"]} />
          <Lines className="w-[145px]" items={["THỜI GIAN", "TB TRÊN", "WEBSITE"]} />
          <Lines className="w-[106px]" items={["TỶ LỆ", "THOÁT"]} />
        </div>
        <div className={`${bodyCell} flex h-[70px] w-[930px] items-center border-b-2 border-[#e8e8e8] pt-[1px] pl-[20.5px]`}>
          <span className="w-[256px]">Nhập trực tiếp</span>
          <span className="w-[100px] text-right">5</span>
          <span className="w-[171px] text-right">57</span>
          <span className="w-[117px] text-right">11,4</span>
          <span className="w-[145px] text-right">33 giây</span>
          <span className="w-[106px] text-right">0%</span>
        </div>
        <div className="h-[25px] border-b-2 border-[#e8e8e8] bg-[#fafafa] pt-[5px] pl-[4.5px]">
          <div className="h-[14px] w-[845px] rounded-full bg-[#c1c1c1]" />
        </div>
      </div>
    </Card>
  );
}

function ChatBubble() {
  return (
    <div className="absolute top-[1281px] left-[2799px] flex h-[83px] w-[83px] items-center justify-center rounded-full bg-white">
      <svg viewBox="0 0 56 56" className="h-[56px] w-[56px]">
        <path d="M28 1.500A26.500 26.500 0 1 1 17 52Q12 53 5.500 55.500Q3 56 3.500 53L5.500 43.500A26.500 26.500 0 0 1 28 1.500Z" fill="#4a82ee" />
        <g transform="translate(9.500 18.500) scale(0.25)" fill="white">
          <BrandGlyph />
        </g>
      </svg>
    </div>
  );
}

export default function App() {
  return (
    <div className="relative h-[1610px] w-[2880px] overflow-hidden bg-[#f1f1f1] pt-[41px] pr-[39.5px] pl-[41px] font-['Inter',sans-serif]">
      <Header />
      <PluginBar />
      <main className="mt-[41px] flex h-[1268px] w-[2799px] overflow-hidden bg-white">
        <div className="w-[2774px] shrink-0 pt-[13px]">
          <div className="flex gap-[30px]">
            <FilterButton className="w-[381px] pl-[22px] tracking-[0.1px]">
              <CalendarIcon />
              <span className="ml-[10px]">TỪ 2022-04-25 ĐẾN 2022-05-01</span>
            </FilterButton>
            <FilterButton className="w-[300px] pl-[23px] tracking-[-0.15px]">
              <UsersIcon />
              <span className="ml-[11px]">TẤT CẢ LƯỢT TRUY CẬP</span>
            </FilterButton>
            <FilterButton className="w-[245px] pl-[29px]">
              <svg viewBox="0 0 8 7" className="h-[7px] w-[8px]">
                <path d="M0 0H8L4 7Z" fill="#1f1f1f" />
              </svg>
              <span className="ml-[14px]">BẢNG ĐIỀU KHIỂN</span>
            </FilterButton>
          </div>
          <div className="mt-[41px] flex gap-[28px] pl-[3px]">
            <div className="flex flex-col gap-[31px]">
              <LiveCounter />
              <RealtimeVisits />
            </div>
            <div className="flex flex-col gap-[31px]">
              <VisitsChart />
              <VisitorMap />
            </div>
            <div className="flex flex-col gap-[31px]">
              <Movers />
              <ChannelTypes />
            </div>
          </div>
        </div>
        <div className="w-[25px] shrink-0 border-l-2 border-[#e8e8e8] bg-[#fafafa] pt-[6px] pl-[5px]">
          <div className="h-[772px] w-[14px] rounded-full bg-[#c1c1c1]" />
        </div>
      </main>
      <ChatBubble />
    </div>
  );
}
